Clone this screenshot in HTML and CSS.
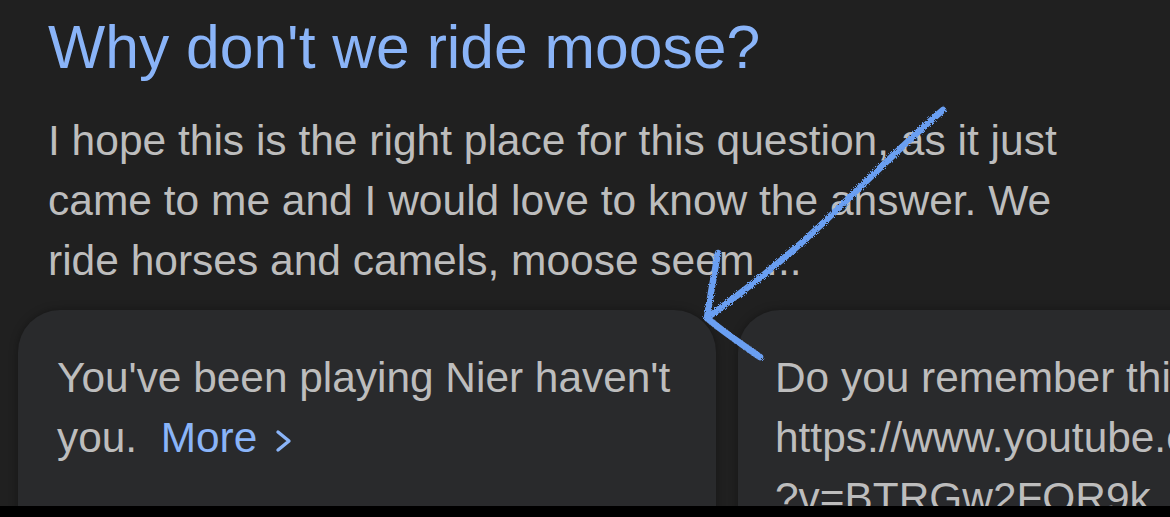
FILE: index.html
```
<!DOCTYPE html>
<html>
<head>
<meta charset="utf-8">
<link rel="stylesheet" href="styles.css">
</head>
<body>
<div class="screen">
  <main class="content">
    <h1 class="title">Why don't we ride moose?</h1>
    <p class="snippet">I hope this is the right place for this question, as it just came to me and I would love to know the answer. We ride horses and camels, moose seem ...</p>
    <div class="cards">
      <div class="card">
        <p class="card-text">You've been playing Nier haven't you.&nbsp; <span class="more">More</span><svg class="chev" width="17" height="24" viewBox="0 0 17 24"><path d="M3 3 L14 12 L3 21" fill="none" stroke="#8ab4f8" stroke-width="3.4" stroke-linecap="round" stroke-linejoin="round"/></svg></p>
      </div>
      <div class="card">
        <p class="card-text">Do you remember this?<br>https://www.youtube.com/watch<br>?v=BTRGw2FQR9k</p>
      </div>
    </div>
    <svg class="scribble" width="1170" height="506" viewBox="0 0 1170 506">
      <defs>
        <filter id="chalk" x="-10%" y="-10%" width="120%" height="120%">
          <feTurbulence type="fractalNoise" baseFrequency="1.1" numOctaves="2" result="n"/>
          <feDisplacementMap in="SourceGraphic" in2="n" scale="4"/>
        </filter>
      </defs>
      <g fill="none" stroke="#6b9ff2" stroke-linecap="round" stroke-linejoin="round" filter="url(#chalk)">
        <path d="M943 110 C 905 142, 862 186, 822 224 C 782 262, 745 290, 707 318" stroke-width="6.5"/>
        <path d="M718 253 C 714 275, 710 297, 707 318" stroke-width="6.5"/>
        <path d="M707 318 C 722 331, 740 343, 760 357" stroke-width="6.5"/>
      </g>
    </svg>
  </main>
  <div class="bottom-bar"></div>
</div>
</body>
</html>
```
FILE: styles.css
```
html, body {
  margin: 0;
  padding: 0;
  background: #000;
}
.screen {
  width: 1170px;
  height: 517px;
  display: flex;
  flex-direction: column;
  overflow: hidden;
  font-family: "Liberation Sans", Arial, sans-serif;
}
.content {
  position: relative;
  height: 506px;
  flex: 0 0 506px;
  overflow: hidden;
  background: #202020;
  padding: 12px 0 0 0;
  box-sizing: border-box;
}
.title {
  margin: 0 0 0 48px;
  font-size: 60.6px;
  line-height: 70px;
  font-weight: 400;
  color: #8ab4f8;
}
.snippet {
  margin: 29px 70px 0 48px;
  font-size: 42.5px;
  line-height: 60px;
  color: #bdbdbd;
}
.cards {
  display: flex;
  gap: 22px;
  margin: 19px 0 0 18px;
}
.card {
  flex: 0 0 698px;
  height: 260px;
  box-sizing: border-box;
  background: #292a2c;
  border-radius: 42px;
  padding: 38px 30px 0 39px;
  box-shadow: 0 0 8px rgba(0, 0, 0, 0.35);
}
.card + .card {
  padding-left: 37px;
}
.card-text {
  margin: 0;
  font-size: 42.4px;
  line-height: 60px;
  color: #bdbdbd;
  white-space: nowrap;
}
.card:first-child .card-text {
  white-space: normal;
}
.more {
  color: #8ab4f8;
}
.chev {
  vertical-align: -1px;
  margin-left: 18px;
}
.scribble {
  position: absolute;
  left: 0;
  top: 0;
  pointer-events: none;
}
.bottom-bar {
  flex: 0 0 11px;
  background: #000;
}
```
